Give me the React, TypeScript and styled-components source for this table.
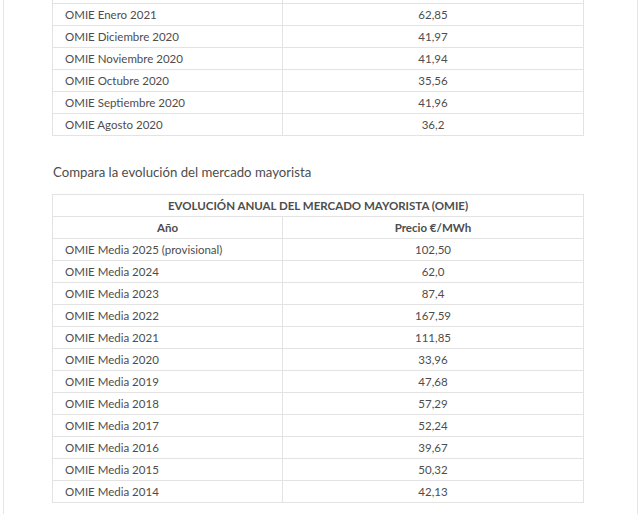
import React from "react";
import styled, { createGlobalStyle } from "styled-components";

const Global = createGlobalStyle`
  html, body { margin: 0; padding: 0; background: #ffffff; }
  body { font-family: Lato, "Open Sans", "Liberation Sans", sans-serif; color: #4d4d4d; overflow: hidden; }
`;

const Page = styled.div`
  width: 640px;
  height: 514px;
  overflow: hidden;
`;

const Card = styled.div`
  margin: -19px 0 0 3px;
  width: 635px;
  min-height: 560px;
  border-left: 1px solid #e6e6e6;
  border-right: 1px solid #e6e6e6;
  padding: 0 0 0 48px;
  box-sizing: border-box;
`;

const Table = styled.table`
  width: 532px;
  border-collapse: collapse;
  font-size: 11.5px;
  color: #4d4d4d;
  table-layout: fixed;
`;

const Cell = styled.td<{ $center?: boolean; $bold?: boolean }>`
  border: 1px solid #e3e3e3;
  height: 22px;
  line-height: 20px;
  padding: 0 12px;
  text-align: ${(p) => (p.$center ? "center" : "left")};
  font-weight: ${(p) => (p.$bold ? 700 : 400)};
  white-space: nowrap;
  box-sizing: border-box;
`;

const LeftCol = styled.col`
  width: 230px;
`;

const Heading = styled.p`
  margin: 25px 0 11px 1px;
  font-size: 13.2px;
  line-height: 22px;
  color: #4d4d4d;
`;

const monthly: [string, string][] = [
  ["OMIE Enero 2021", "62,85"],
  ["OMIE Diciembre 2020", "41,97"],
  ["OMIE Noviembre 2020", "41,94"],
  ["OMIE Octubre 2020", "35,56"],
  ["OMIE Septiembre 2020", "41,96"],
  ["OMIE Agosto 2020", "36,2"],
];

const yearly: [string, string][] = [
  ["OMIE Media 2025 (provisional)", "102,50"],
  ["OMIE Media 2024", "62,0"],
  ["OMIE Media 2023", "87,4"],
  ["OMIE Media 2022", "167,59"],
  ["OMIE Media 2021", "111,85"],
  ["OMIE Media 2020", "33,96"],
  ["OMIE Media 2019", "47,68"],
  ["OMIE Media 2018", "57,29"],
  ["OMIE Media 2017", "52,24"],
  ["OMIE Media 2016", "39,67"],
  ["OMIE Media 2015", "50,32"],
  ["OMIE Media 2014", "42,13"],
];

const Rows = ({ data }: { data: [string, string][] }) => (
  <>
    {data.map(([a, b]) => (
      <tr key={a}>
        <Cell>{a}</Cell>
        <Cell $center>{b}</Cell>
      </tr>
    ))}
  </>
);

export default function App() {
  return (
    <Page>
      <Global />
      <Card>
        <Table>
          <colgroup>
            <LeftCol />
            <col />
          </colgroup>
          <tbody>
            <tr>
              <Cell />
              <Cell $center />
            </tr>
            <Rows data={monthly} />
          </tbody>
        </Table>
        <Heading>Compara la evolución del mercado mayorista</Heading>
        <Table>
          <colgroup>
            <LeftCol />
            <col />
          </colgroup>
          <tbody>
            <tr>
              <Cell colSpan={2} $center $bold>
                EVOLUCIÓN ANUAL DEL MERCADO MAYORISTA (OMIE)
              </Cell>
            </tr>
            <tr>
              <Cell $center $bold>Año</Cell>
              <Cell $center $bold>Precio €/MWh</Cell>
            </tr>
            <Rows data={yearly} />
          </tbody>
        </Table>
      </Card>
    </Page>
  );
}
